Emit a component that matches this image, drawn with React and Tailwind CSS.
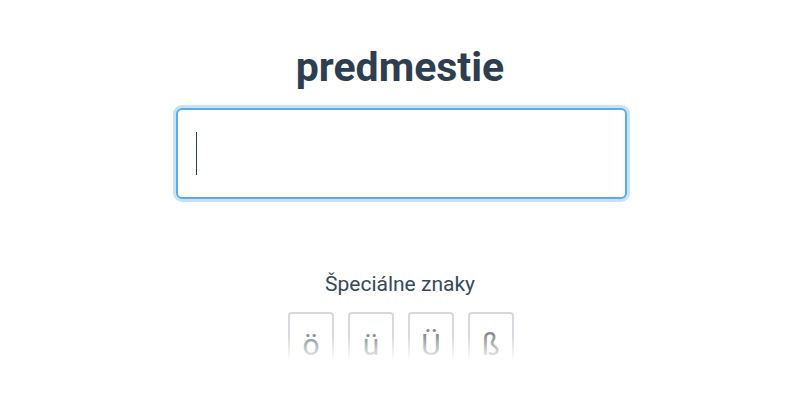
import React from "react";

const chars = ["ö", "ü", "Ü", "ß"];

const App = () => {
  return (
    <div className="w-[800px] h-[400px] bg-white overflow-hidden flex flex-col items-center font-['Roboto',sans-serif]">
      <h1 className="mt-[39px] text-[41px] leading-[56px] font-bold text-[#2c3e50]">predmestie</h1>
      <div className="mt-[13px] ml-[2px] w-[451px] h-[91px] rounded-[6px] border-2 border-[#5dade2] ring-[3px] ring-[#c6e2f7] bg-white flex items-center pl-[18px]">
        <div className="w-[1.5px] h-[43px] bg-[#2c3e50]" />
      </div>
      <div className="mt-[71px] text-[21px] leading-[28px] text-[#34495e]">Špeciálne znaky</div>
      <div className="relative mt-[14px] ml-[2px] flex gap-[14px]">
        {chars.map((c) => (
          <button
            key={c}
            className="w-[46px] h-[60px] border-2 border-[#d5d8dc] rounded-[4px] bg-white text-[30px] leading-[30px] text-[#7f8c8d] flex items-start justify-center pt-[16px]"
          >
            {c}
          </button>
        ))}
        <div className="absolute left-[-4px] right-[-4px] top-[22px] h-[28px] bg-gradient-to-b from-transparent to-white" />
        <div className="absolute left-[-4px] right-[-4px] top-[50px] h-[12px] bg-white" />
      </div>
    </div>
  );
};

export default App;
